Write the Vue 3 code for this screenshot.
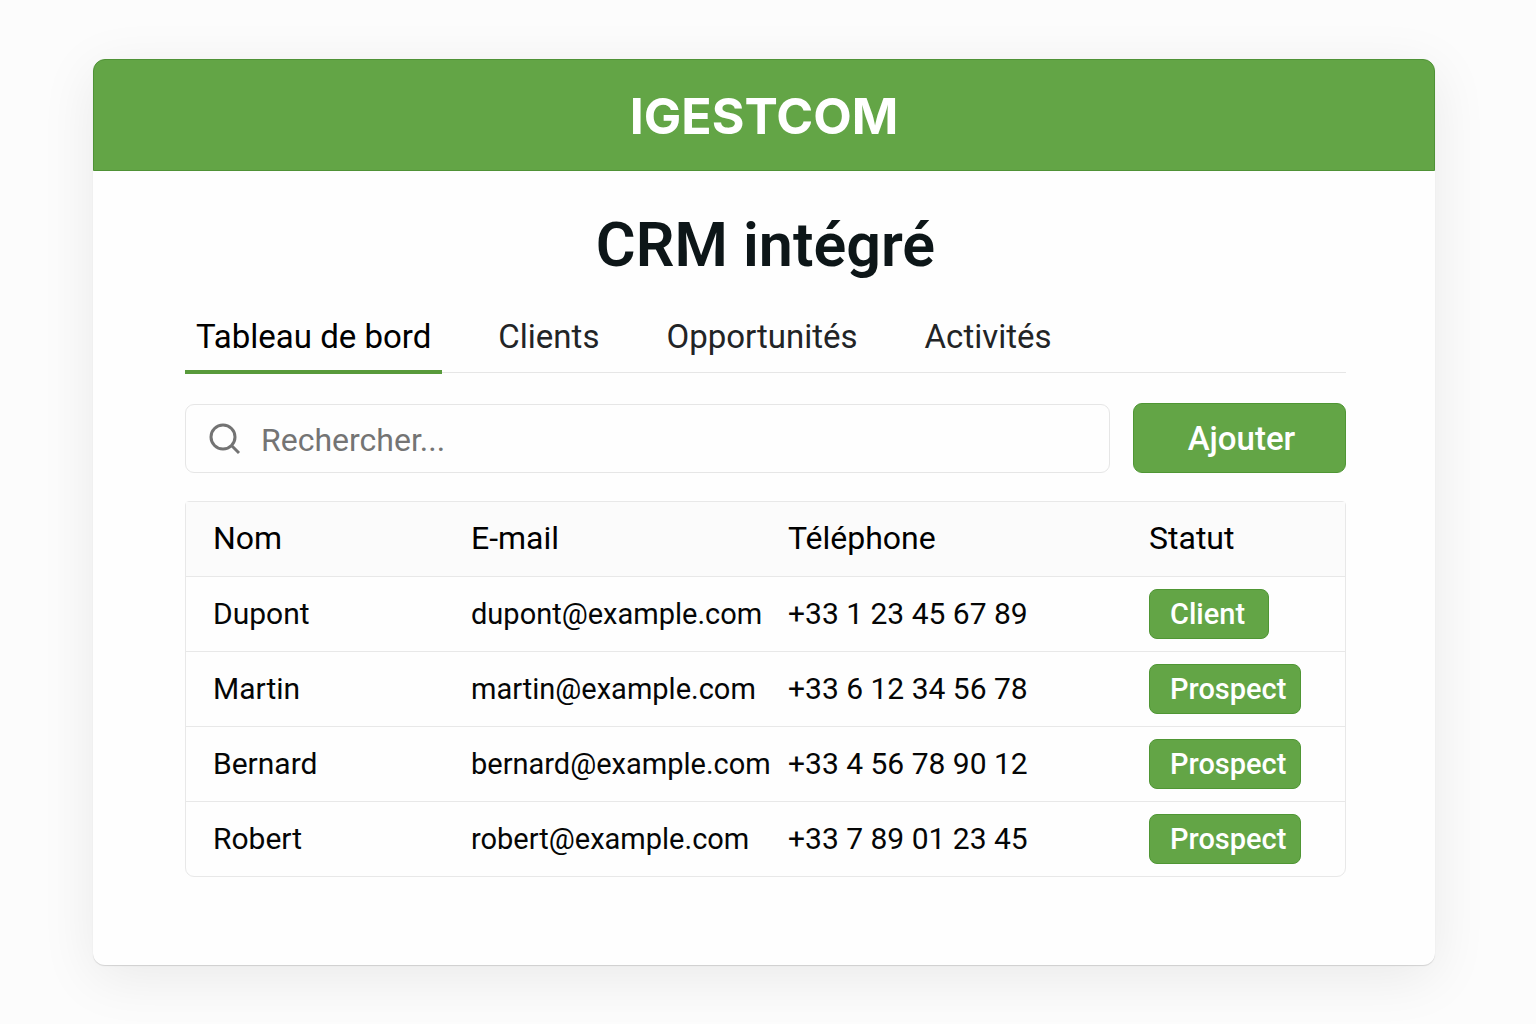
<script setup>
import { ref } from 'vue'

const tabs = ['Tableau de bord', 'Clients', 'Opportunités', 'Activités']
const activeTab = ref('Tableau de bord')
const query = ref('')

const contacts = [
  { name: 'Dupont', email: 'dupont@example.com', phone: '+33 1 23 45 67 89', status: 'Client' },
  { name: 'Martin', email: 'martin@example.com', phone: '+33 6 12 34 56 78', status: 'Prospect' },
  { name: 'Bernard', email: 'bernard@example.com', phone: '+33 4 56 78 90 12', status: 'Prospect' },
  { name: 'Robert', email: 'robert@example.com', phone: '+33 7 89 01 23 45', status: 'Prospect' },
]
</script>

<template>
  <div class="page">
    <div class="card">
      <header class="brand">IGESTCOM</header>
      <main class="content">
        <h1 class="title">CRM intégré</h1>

        <nav class="tabs" aria-label="Sections">
          <a
            v-for="tab in tabs"
            :key="tab"
            href="#"
            class="tab"
            :class="{ active: tab === activeTab }"
            @click.prevent="activeTab = tab"
          >{{ tab }}</a>
        </nav>

        <form class="toolbar" @submit.prevent>
          <label class="search">
            <svg class="search-icon" viewBox="0 0 32 32" aria-hidden="true">
              <circle cx="14" cy="14" r="12" />
              <path d="M22 22l8 8" />
            </svg>
            <input v-model="query" type="text" placeholder="Rechercher..." aria-label="Rechercher" />
          </label>
          <button type="button" class="add">Ajouter</button>
        </form>

        <table class="contacts">
          <colgroup>
            <col class="col-name" />
            <col class="col-email" />
            <col class="col-phone" />
            <col />
          </colgroup>
          <thead>
            <tr>
              <th scope="col">Nom</th>
              <th scope="col">E-mail</th>
              <th scope="col">Téléphone</th>
              <th scope="col">Statut</th>
            </tr>
          </thead>
          <tbody>
            <tr v-for="c in contacts" :key="c.email">
              <td>{{ c.name }}</td>
              <td class="email">{{ c.email }}</td>
              <td>{{ c.phone }}</td>
              <td><span class="badge">{{ c.status }}</span></td>
            </tr>
          </tbody>
        </table>
      </main>
    </div>
  </div>
</template>

<style>
body {
  margin: 0;
  background: #fcfcfc;
}
</style>

<style scoped>
.page,
.page * {
  box-sizing: border-box;
}
.page {
  min-height: 100vh;
  padding: 59px 101px 58px 93px;
  font-family: Roboto, "Liberation Sans", sans-serif;
  color: #050606;
}
.card {
  border-radius: 12px;
  background: #fefefe;
  box-shadow: 0 1px 1px rgba(0, 0, 0, 0.14), 0 12px 56px rgba(0, 0, 0, 0.08);
}
.brand {
  height: 112px;
  border: 1px solid #4f9236;
  border-radius: 12px 12px 0 0;
  background: #63a546;
  color: #fff;
  font: 700 50px/112px Inter, sans-serif;
  text-align: center;
}
.content {
  padding: 36px 89px 88px 92px;
}
.title {
  margin: 0;
  font-size: 61px;
  font-weight: 600;
  line-height: 76px;
  text-align: center;
  color: #0d1618;
}
.tabs {
  display: flex;
  gap: 45px;
  margin-top: 22px;
  height: 69px;
  background: linear-gradient(#e6e6e6, #e6e6e6) 0 67px / 100% 1px no-repeat;
}
.tab {
  height: 69px;
  padding: 12px 11px 0;
  border-bottom: 4px solid transparent;
  font-size: 33px;
  line-height: 40px;
  color: #222426;
  text-decoration: none;
  white-space: nowrap;
}
.tab.active {
  border-bottom-color: #589a3b;
  color: #000;
}
.toolbar {
  display: flex;
  align-items: flex-end;
  gap: 23px;
  margin-top: 29px;
}
.search {
  flex: 1;
  display: flex;
  align-items: center;
  gap: 20px;
  height: 69px;
  padding: 0 23px;
  border: 1px solid #e6e6e6;
  border-radius: 9px;
}
.search-icon {
  width: 32px;
  height: 32px;
  fill: none;
  stroke: #737373;
  stroke-width: 3;
}
.search input {
  flex: 1;
  min-width: 0;
  padding: 2px 0 0;
  border: 0;
  outline: 0;
  background: transparent;
  font: 400 32px/40px Roboto, "Liberation Sans", sans-serif;
  color: inherit;
}
.search input::placeholder {
  color: #747474;
  opacity: 1;
}
.add {
  width: 213px;
  height: 70px;
  padding: 2px 0 0 4px;
  border: 1px solid #4f9634;
  border-radius: 9px;
  background: #63a546;
  color: #fff;
  font: 500 33px/40px Roboto, "Liberation Sans", sans-serif;
}
.contacts {
  width: 100%;
  margin-top: 28px;
  border: 1px solid #e8e8e8;
  border-radius: 4px 4px 9px 9px;
  border-collapse: separate;
  border-spacing: 0;
  table-layout: fixed;
  font-size: 30px;
  line-height: 40px;
}
.col-name {
  width: 285px;
}
.col-email {
  width: 317px;
}
.col-phone {
  width: 361px;
}
.contacts th,
.contacts td {
  height: 75px;
  padding: 0;
  border-bottom: 1px solid #e8e8e8;
  text-align: left;
  vertical-align: middle;
  white-space: nowrap;
}
.contacts th {
  padding-bottom: 2px;
  background: #fbfbfb;
  font-size: 32px;
  font-weight: 400;
  color: #000;
}
.contacts th:first-child,
.contacts td:first-child {
  padding-left: 27px;
}
.contacts tbody tr:last-child td {
  height: 74px;
  border-bottom: 0;
}
.contacts .email {
  font-size: 29px;
}
.badge {
  display: inline-block;
  min-width: 120px;
  height: 50px;
  padding: 0 14px 0 20px;
  border: 1px solid #4f9634;
  border-radius: 8px;
  background: #63a546;
  color: #fff;
  font-size: 29px;
  font-weight: 500;
  line-height: 48px;
  vertical-align: middle;
}
</style>
